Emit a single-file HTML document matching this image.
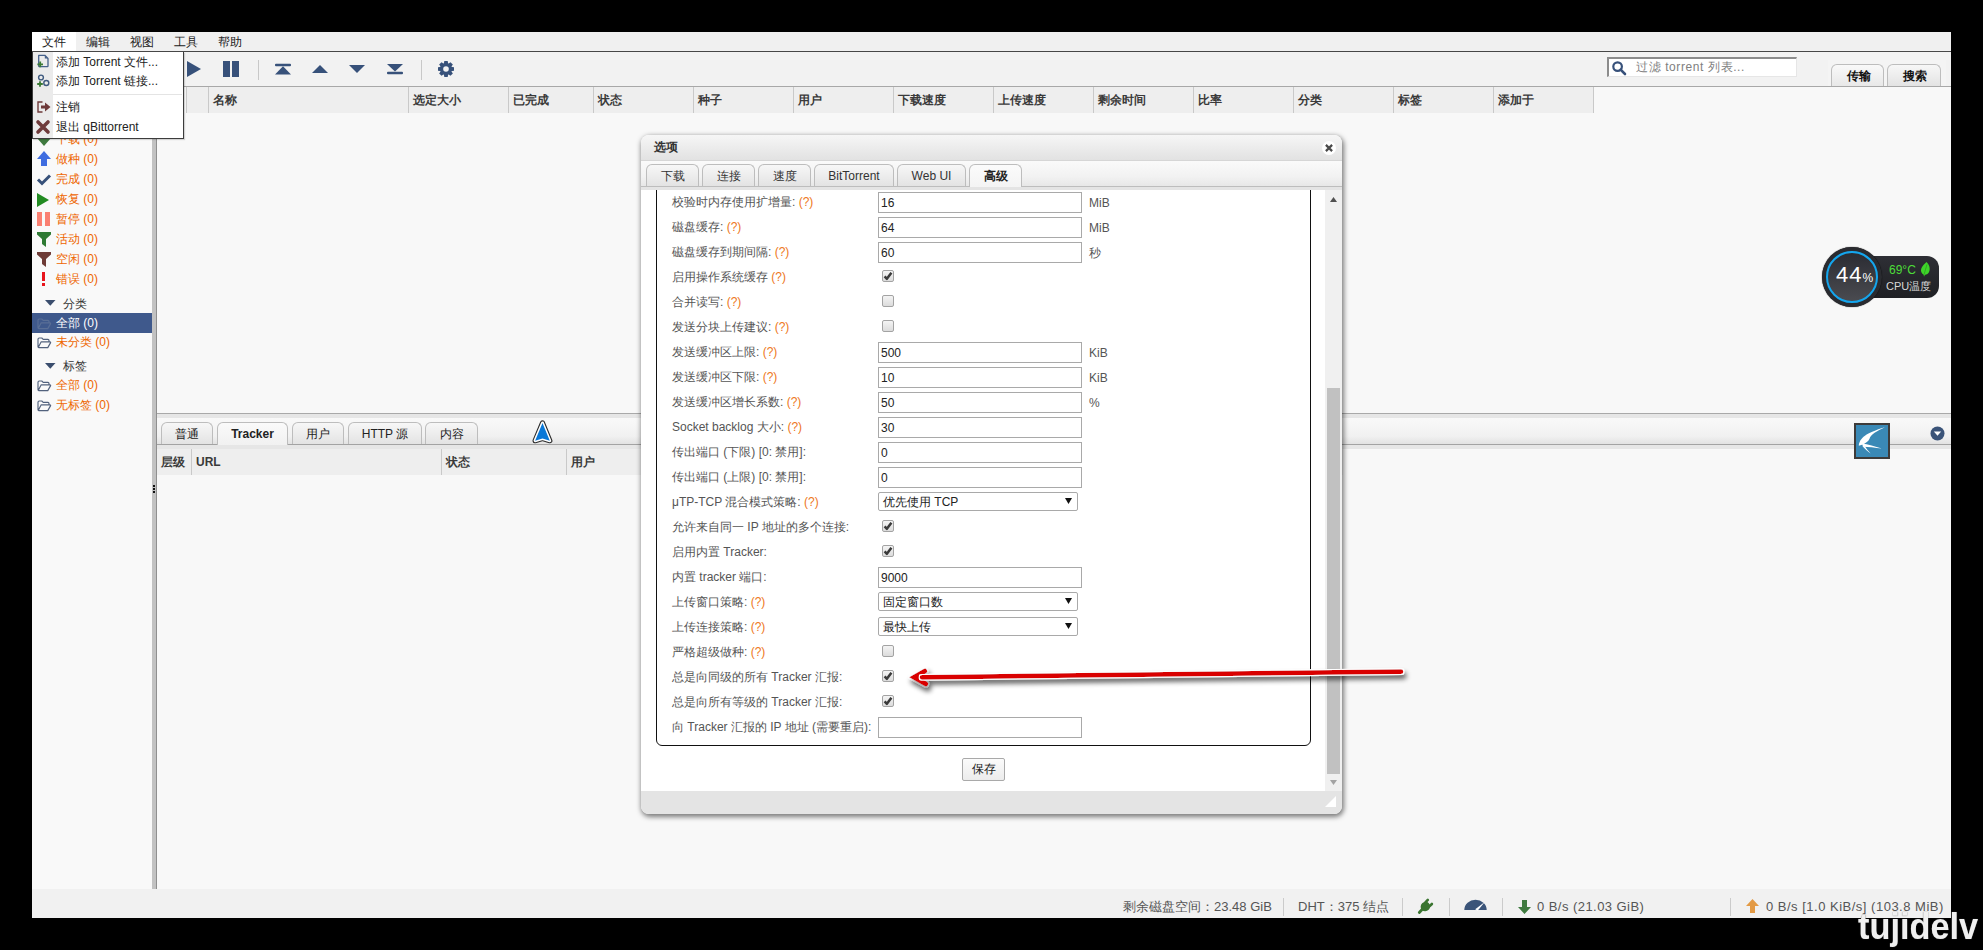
<!DOCTYPE html><html><head><meta charset="utf-8"><style>
*{box-sizing:border-box}
html,body{margin:0;padding:0}
body{width:1983px;height:950px;background:#000;position:relative;overflow:hidden;font-family:"Liberation Sans",sans-serif;font-size:12px;color:#333}
.a{position:absolute}
.t{position:absolute;white-space:nowrap;line-height:14px}
svg{position:absolute;overflow:visible}
#win{left:32px;top:32px;width:1919px;height:886px;background:#f8f8f8}
.hc{position:absolute;top:0;height:26px;border-left:1px solid #cacaca;line-height:26px;padding-left:4px;font-weight:bold;color:#3a3a3a;white-space:nowrap}
.st{position:absolute;color:#555;white-space:nowrap;line-height:14px;font-size:13px}
.sbs{position:absolute;top:898px;width:1px;height:18px;background:#cbcbcb}
.sl{position:absolute;left:56px;color:#ee6600;white-space:nowrap;line-height:14px}
.tab{position:absolute;border:1px solid #bdbdbd;border-bottom:none;border-radius:6px 6px 0 0;background:linear-gradient(#f7f7f7,#e3e3e3);text-align:center;white-space:nowrap;color:#333;line-height:20px}
.lbl{position:absolute;left:672px;color:#555;white-space:nowrap;line-height:14px}
.q{color:#ee7722}
.inp{position:absolute;left:878px;width:204px;height:21px;border:1px solid #a9a9a9;background:#fff;color:#222;padding-left:2px;padding-top:1px;line-height:18px;white-space:nowrap}
.sel{position:absolute;left:878px;width:200px;height:19px;border:1px solid #a9a9a9;border-radius:2px;background:#fff;color:#222;padding-left:4px;padding-top:1px;line-height:17px;white-space:nowrap}
.cb{position:absolute;left:882px;width:12px;height:12px;border:1px solid #a3a3a3;border-radius:2px;background:linear-gradient(#f4f4f4,#dcdcdc)}
.unit{position:absolute;left:1089px;color:#555;white-space:nowrap;line-height:14px}
</style></head><body>
<div id="win" class="a"></div>
<div class="a" style="left:32px;top:32px;width:1919px;height:19px;background:#f0f0f0"></div>
<div class="a" style="left:32px;top:51px;width:1919px;height:1px;background:#474747"></div>
<div class="a" style="left:32px;top:32px;width:44px;height:19px;background:#fff"></div>
<span class="t" style="left:42px;top:35px;color:#222">文件</span>
<span class="t" style="left:86px;top:35px;color:#222">编辑</span>
<span class="t" style="left:130px;top:35px;color:#222">视图</span>
<span class="t" style="left:174px;top:35px;color:#222">工具</span>
<span class="t" style="left:218px;top:35px;color:#222">帮助</span>
<div class="a" style="left:32px;top:52px;width:1919px;height:34px;background:#f2f2f2"></div>
<div class="a" style="left:157px;top:86px;width:1794px;height:1px;background:#a8a8a8"></div>
<svg style="left:187px;top:61px" width="15" height="16"><path d="M0 0L14 8L0 16Z" fill="#37517a"/></svg>
<div class="a" style="left:223px;top:61px;width:7px;height:16px;background:#37517a"></div>
<div class="a" style="left:232px;top:61px;width:7px;height:16px;background:#37517a"></div>
<div class="a" style="left:258px;top:60px;width:1px;height:20px;background:#c8c8c8"></div>
<svg style="left:275px;top:63px" width="16" height="12"><rect x="0" y="0.8" width="16" height="2.5" rx="1" fill="#37517a"/><path d="M8 3.3L16 11.6L0 11.6Z" fill="#37517a"/></svg>
<svg style="left:312px;top:65px" width="16" height="8"><path d="M8 0L16 8L0 8Z" fill="#37517a"/></svg>
<svg style="left:349px;top:65px" width="16" height="9"><path d="M0 0L16 0L8 8Z" fill="#37517a"/></svg>
<svg style="left:387px;top:64px" width="16" height="12"><path d="M0 0L16 0L8 7.4Z" fill="#37517a"/><rect x="0" y="7.8" width="16" height="2.4" rx="1" fill="#37517a"/></svg>
<div class="a" style="left:421px;top:60px;width:1px;height:20px;background:#c8c8c8"></div>
<svg style="left:438px;top:61px" width="16" height="16"><path d="M6.3 0H9.7L10.3 3.5H5.7Z" transform="rotate(0 8 8)" fill="#37517a"/><path d="M6.3 0H9.7L10.3 3.5H5.7Z" transform="rotate(45 8 8)" fill="#37517a"/><path d="M6.3 0H9.7L10.3 3.5H5.7Z" transform="rotate(90 8 8)" fill="#37517a"/><path d="M6.3 0H9.7L10.3 3.5H5.7Z" transform="rotate(135 8 8)" fill="#37517a"/><path d="M6.3 0H9.7L10.3 3.5H5.7Z" transform="rotate(180 8 8)" fill="#37517a"/><path d="M6.3 0H9.7L10.3 3.5H5.7Z" transform="rotate(225 8 8)" fill="#37517a"/><path d="M6.3 0H9.7L10.3 3.5H5.7Z" transform="rotate(270 8 8)" fill="#37517a"/><path d="M6.3 0H9.7L10.3 3.5H5.7Z" transform="rotate(315 8 8)" fill="#37517a"/><circle cx="8" cy="8" r="5.9" fill="#37517a"/><circle cx="8" cy="8" r="2.8" fill="#f2f2f2"/></svg>
<div class="a" style="left:1607px;top:57px;width:190px;height:20px;background:#fff;border-top:2px solid #8c8c8c;border-left:2px solid #8c8c8c;border-right:1px solid #e6e6e6;border-bottom:1px solid #e6e6e6"></div>
<svg style="left:1612px;top:61px" width="15" height="14"><circle cx="5.6" cy="5.6" r="4.3" fill="none" stroke="#37517a" stroke-width="2.2"/><path d="M8.6 8.6L13 13" stroke="#37517a" stroke-width="2.6" stroke-linecap="round"/></svg>
<span class="t" style="left:1636px;top:60px;color:#808080;letter-spacing:0.6px">过滤 torrent 列表...</span>
<div class="a" style="left:1828px;top:60px;width:118px;height:26px;background:#f4f4f4"></div>
<div class="tab" style="left:1831px;top:64px;width:53px;height:22px;background:linear-gradient(#f9f9f9,#e8e8e8);font-weight:bold;color:#111;line-height:22px;padding-left:2px">传输</div>
<div class="tab" style="left:1887px;top:64px;width:54px;height:22px;color:#111;line-height:22px;font-weight:bold;padding-left:2px">搜索</div>
<div class="a" style="left:32px;top:87px;width:120px;height:802px;background:#f9f9f9"></div>
<div class="a" style="left:152px;top:52px;width:4px;height:837px;background:#c2c2c2"></div>
<div class="a" style="left:156px;top:87px;width:1px;height:802px;background:#8f8f8f"></div>
<div class="a" style="left:153px;top:485px;width:2px;height:2px;background:#111"></div>
<div class="a" style="left:153px;top:488px;width:2px;height:2px;background:#111"></div>
<div class="a" style="left:153px;top:491px;width:2px;height:2px;background:#111"></div>
<span class="sl" style="top:132px;color:#ee6600">下载 (0)</span>
<span class="sl" style="top:152px;color:#ee6600">做种 (0)</span>
<span class="sl" style="top:172px;color:#ee6600">完成 (0)</span>
<span class="sl" style="top:192px;color:#ee6600">恢复 (0)</span>
<span class="sl" style="top:212px;color:#ee6600">暂停 (0)</span>
<span class="sl" style="top:232px;color:#ee6600">活动 (0)</span>
<span class="sl" style="top:252px;color:#ee6600">空闲 (0)</span>
<span class="sl" style="top:272px;color:#ee6600">错误 (0)</span>
<svg style="left:37px;top:131px" width="14" height="16"><path d="M4 0H10V7H14L7 15L0 7H4Z" fill="#3f7a3f"/></svg>
<svg style="left:37px;top:151px" width="14" height="16"><path d="M7 0L14 8H10V15H4V8H0Z" fill="#3f6de0"/></svg>
<svg style="left:37px;top:174px" width="14" height="11"><path d="M1 5.5L5 9.5L13 1.5" fill="none" stroke="#37517a" stroke-width="3"/></svg>
<svg style="left:37px;top:193px" width="13" height="14"><path d="M0 0L12 7L0 14Z" fill="#228b22"/></svg>
<div class="a" style="left:37px;top:212px;width:5px;height:14px;background:#fa8072"></div><div class="a" style="left:45px;top:212px;width:5px;height:14px;background:#fa8072"></div>
<svg style="left:37px;top:232px" width="14" height="15"><path d="M0 0H14V2.5L9 7V15L5 12V7L0 2.5Z" fill="#2f7a34"/></svg>
<svg style="left:37px;top:252px" width="14" height="15"><path d="M0 0H14V2.5L9 7V15L5 12V7L0 2.5Z" fill="#6e3b36"/></svg>
<div class="a" style="left:42px;top:272px;width:3px;height:9px;background:#e8141b"></div><div class="a" style="left:42px;top:283px;width:3px;height:3px;background:#e8141b"></div>
<svg style="left:45px;top:300px" width="11" height="7"><path d="M0 0H10.5L5.25 5.8Z" fill="#3b4e6e"/></svg>
<span class="t" style="left:63px;top:297px;color:#333">分类</span>
<div class="a" style="left:32px;top:313px;width:120px;height:20px;background:#3f598c"></div>
<svg style="left:37px;top:318px" width="15" height="12"><path d="M1 2.2Q1 1 2.2 1H4.8L6.2 2.4H11Q12 2.4 12 3.4V4.8M1 2.2V9.8Q1 10.6 1.8 10.6H10.8L13.6 5.6Q13.8 4.8 13 4.8H4.2L1.2 10.4" fill="none" stroke="#5a6f96" stroke-width="1.15" stroke-linejoin="round"/></svg>
<span class="sl" style="top:316px;color:#fff">全部 (0)</span>
<svg style="left:37px;top:337px" width="15" height="12"><path d="M1 2.2Q1 1 2.2 1H4.8L6.2 2.4H11Q12 2.4 12 3.4V4.8M1 2.2V9.8Q1 10.6 1.8 10.6H10.8L13.6 5.6Q13.8 4.8 13 4.8H4.2L1.2 10.4" fill="none" stroke="#52627d" stroke-width="1.15" stroke-linejoin="round"/></svg>
<span class="sl" style="top:335px;color:#ee6600">未分类 (0)</span>
<svg style="left:45px;top:363px" width="11" height="7"><path d="M0 0H10.5L5.25 5.8Z" fill="#3b4e6e"/></svg>
<span class="t" style="left:63px;top:359px;color:#333">标签</span>
<svg style="left:37px;top:380px" width="15" height="12"><path d="M1 2.2Q1 1 2.2 1H4.8L6.2 2.4H11Q12 2.4 12 3.4V4.8M1 2.2V9.8Q1 10.6 1.8 10.6H10.8L13.6 5.6Q13.8 4.8 13 4.8H4.2L1.2 10.4" fill="none" stroke="#52627d" stroke-width="1.15" stroke-linejoin="round"/></svg>
<span class="sl" style="top:378px;color:#ee6600">全部 (0)</span>
<svg style="left:37px;top:400px" width="15" height="12"><path d="M1 2.2Q1 1 2.2 1H4.8L6.2 2.4H11Q12 2.4 12 3.4V4.8M1 2.2V9.8Q1 10.6 1.8 10.6H10.8L13.6 5.6Q13.8 4.8 13 4.8H4.2L1.2 10.4" fill="none" stroke="#52627d" stroke-width="1.15" stroke-linejoin="round"/></svg>
<span class="sl" style="top:398px;color:#ee6600">无标签 (0)</span>
<div class="a" style="left:186px;top:87px;width:1407px;height:26px;background:#eeeeee"></div>
<div class="hc" style="left:186px;top:87px;width:1px;padding:0;border-left:1px solid #c9c9c9"></div>
<div class="hc" style="left:208px;top:87px;width:1px;padding:0;border-left:1px solid #c9c9c9"></div>
<span class="t" style="left:213px;top:93px;font-weight:bold;color:#3a3a3a">名称</span>
<div class="hc" style="left:408px;top:87px;width:1px;padding:0;border-left:1px solid #c9c9c9"></div>
<span class="t" style="left:413px;top:93px;font-weight:bold;color:#3a3a3a">选定大小</span>
<div class="hc" style="left:508px;top:87px;width:1px;padding:0;border-left:1px solid #c9c9c9"></div>
<span class="t" style="left:513px;top:93px;font-weight:bold;color:#3a3a3a">已完成</span>
<div class="hc" style="left:593px;top:87px;width:1px;padding:0;border-left:1px solid #c9c9c9"></div>
<span class="t" style="left:598px;top:93px;font-weight:bold;color:#3a3a3a">状态</span>
<div class="hc" style="left:693px;top:87px;width:1px;padding:0;border-left:1px solid #c9c9c9"></div>
<span class="t" style="left:698px;top:93px;font-weight:bold;color:#3a3a3a">种子</span>
<div class="hc" style="left:793px;top:87px;width:1px;padding:0;border-left:1px solid #c9c9c9"></div>
<span class="t" style="left:798px;top:93px;font-weight:bold;color:#3a3a3a">用户</span>
<div class="hc" style="left:893px;top:87px;width:1px;padding:0;border-left:1px solid #c9c9c9"></div>
<span class="t" style="left:898px;top:93px;font-weight:bold;color:#3a3a3a">下载速度</span>
<div class="hc" style="left:993px;top:87px;width:1px;padding:0;border-left:1px solid #c9c9c9"></div>
<span class="t" style="left:998px;top:93px;font-weight:bold;color:#3a3a3a">上传速度</span>
<div class="hc" style="left:1093px;top:87px;width:1px;padding:0;border-left:1px solid #c9c9c9"></div>
<span class="t" style="left:1098px;top:93px;font-weight:bold;color:#3a3a3a">剩余时间</span>
<div class="hc" style="left:1193px;top:87px;width:1px;padding:0;border-left:1px solid #c9c9c9"></div>
<span class="t" style="left:1198px;top:93px;font-weight:bold;color:#3a3a3a">比率</span>
<div class="hc" style="left:1293px;top:87px;width:1px;padding:0;border-left:1px solid #c9c9c9"></div>
<span class="t" style="left:1298px;top:93px;font-weight:bold;color:#3a3a3a">分类</span>
<div class="hc" style="left:1393px;top:87px;width:1px;padding:0;border-left:1px solid #c9c9c9"></div>
<span class="t" style="left:1398px;top:93px;font-weight:bold;color:#3a3a3a">标签</span>
<div class="hc" style="left:1493px;top:87px;width:1px;padding:0;border-left:1px solid #c9c9c9"></div>
<span class="t" style="left:1498px;top:93px;font-weight:bold;color:#3a3a3a">添加于</span>
<div class="hc" style="left:1593px;top:87px;width:1px;padding:0;border-left:1px solid #c9c9c9"></div>
<div class="a" style="left:157px;top:413px;width:1794px;height:1px;background:#a9a9a9"></div>
<div class="a" style="left:157px;top:414px;width:1794px;height:4px;background:#e6e6e6"></div>
<div class="a" style="left:157px;top:418px;width:1794px;height:26px;background:linear-gradient(#f9f9f9,#f1f1f1 70%,#e2e2e2)"></div>
<div class="a" style="left:157px;top:444px;width:1794px;height:1px;background:#a3a3a3"></div>
<div class="a" style="left:157px;top:445px;width:1794px;height:4px;background:#e6e6e6"></div>
<div class="tab" style="left:161px;top:422px;width:52px;height:22px;;color:#222;line-height:22px;">普通</div>
<div class="tab" style="left:217px;top:422px;width:71px;height:23px;background:linear-gradient(#fafafa,#f1f1f1);color:#222;line-height:22px;font-weight:bold">Tracker</div>
<div class="tab" style="left:292px;top:422px;width:52px;height:22px;;color:#222;line-height:22px;">用户</div>
<div class="tab" style="left:348px;top:422px;width:74px;height:22px;;color:#222;line-height:22px;">HTTP 源</div>
<div class="tab" style="left:425px;top:422px;width:53px;height:22px;;color:#222;line-height:22px;">内容</div>
<svg style="left:530px;top:419px" width="25" height="26"><path d="M12.5 4L19.8 21.7L12.5 19.6L5.1 21.7Z" fill="#333" stroke="#2a2a2a" stroke-width="5.2" stroke-linejoin="round"/><path d="M12.5 4L19.8 21.7L12.5 19.6L5.1 21.7Z" fill="#fff" stroke="#fff" stroke-width="3" stroke-linejoin="round"/><path d="M12.5 4L19.8 21.7L12.5 19.6L5.1 21.7Z" fill="#0a78d7"/></svg>
<div class="a" style="left:157px;top:449px;width:1186px;height:26px;background:#eeeeee"></div>
<div class="a" style="left:191px;top:449px;width:1px;height:26px;background:#c9c9c9"></div>
<div class="a" style="left:441px;top:449px;width:1px;height:26px;background:#c9c9c9"></div>
<div class="a" style="left:566px;top:449px;width:1px;height:26px;background:#c9c9c9"></div>
<span class="t" style="left:161px;top:455px;font-weight:bold;color:#3a3a3a">层级</span>
<span class="t" style="left:196px;top:455px;font-weight:bold;color:#3a3a3a">URL</span>
<span class="t" style="left:446px;top:455px;font-weight:bold;color:#3a3a3a">状态</span>
<span class="t" style="left:571px;top:455px;font-weight:bold;color:#3a3a3a">用户</span>
<div class="a" style="left:1854px;top:423px;width:36px;height:36px;background:#3a89b6;border:2px solid #3d3b3a"></div>
<svg style="left:1856px;top:425px" width="32" height="32"><path d="M2.8 20.8C3.5 13 10 8 28.8 2.3C21 6 14.5 9.5 13.5 13.8C12.5 16.5 9 18.5 6 19.8Z" fill="#fff"/><path d="M6 18.6C12 19.5 19 21.5 25.8 23.6C19 22.8 12 21.8 7 21.8Z" fill="#fff"/><path d="M6.5 21.2C9 24 12 26.5 14.7 28.6C12.5 26 10.5 23.8 8.8 21.2Z" fill="#fff"/></svg>
<svg style="left:1930px;top:426px" width="15" height="15"><circle cx="7.5" cy="7.5" r="7" fill="#3b5479"/><path d="M3.8 5.5H11.2L7.5 9.8Z" fill="#fff"/></svg>
<div class="a" style="left:32px;top:889px;width:1919px;height:29px;background:#f1f1f1"></div>
<span class="st" style="left:1123px;top:900px">剩余磁盘空间：23.48 GiB</span>
<div class="sbs" style="left:1283px"></div>
<span class="st" style="left:1298px;top:900px">DHT：375 结点</span>
<div class="sbs" style="left:1402px"></div>
<svg style="left:1417px;top:898px" width="17" height="16"><path d="M2.3 14.4L6 10.6" stroke="#3a7530" stroke-width="2.8" stroke-linecap="round"/><path d="M8.4 4.4L10.8 1.9M12.4 8.4L14.9 6" stroke="#3a7530" stroke-width="2.6" stroke-linecap="round"/><ellipse cx="8.4" cy="8.6" rx="4.6" ry="4.9" transform="rotate(45 8.4 8.6)" fill="#3a7530"/></svg>
<div class="sbs" style="left:1449px"></div>
<svg style="left:1464px;top:899px" width="23" height="12"><path d="M0.3 11A11.2 10.2 0 0 1 22.7 11Z" fill="#3b5479"/><path d="M11.2 10.2L20.8 3L13.6 11.8Z" fill="#fff"/></svg>
<div class="sbs" style="left:1502px"></div>
<svg style="left:1518px;top:900px" width="13" height="14"><path d="M4 0H9V7H13L6.5 14L0 7H4Z" fill="#3f7a3f"/></svg>
<span class="st" style="left:1537px;top:900px;letter-spacing:0.45px">0 B/s (21.03 GiB)</span>
<div class="sbs" style="left:1730px"></div>
<svg style="left:1746px;top:899px" width="13" height="14"><path d="M6.5 0L13 7H9V14H4V7H0Z" fill="#e39a45"/></svg>
<span class="st" style="left:1766px;top:900px;letter-spacing:0.5px">0 B/s [1.0 KiB/s] (103.8 MiB)</span>
<div class="a" style="left:32px;top:52px;width:152px;height:87px;background:#fff;border:1px solid #3c3c3c;border-top:none;box-shadow:1px 1px 1px rgba(0,0,0,.15)"></div>
<div class="a" style="left:33px;top:52px;width:20px;height:86px;background:#ebebeb"></div>
<div class="a" style="left:53px;top:94px;width:129px;height:1px;background:#e4e4e4"></div>
<span class="t" style="left:56px;top:55px;color:#222">添加 Torrent 文件...</span>
<span class="t" style="left:56px;top:74px;color:#222">添加 Torrent 链接...</span>
<span class="t" style="left:56px;top:100px;color:#222">注销</span>
<span class="t" style="left:56px;top:120px;color:#222">退出 qBittorrent</span>
<svg style="left:35px;top:54px" width="15" height="15"><path d="M3.7 1.3H9.8L13 4.5V12Q13 12.6 12.4 12.6H4.3Q3.7 12.6 3.7 12Z" fill="none" stroke="#46618a" stroke-width="1.3" stroke-linejoin="round"/><path d="M9.8 1.3V4.5H13Z" fill="#46618a"/><path d="M5.2 7.6V13.2M2.4 10.4H8" stroke="#3a7a34" stroke-width="1.8"/></svg>
<svg style="left:35px;top:73px" width="16" height="15"><circle cx="6" cy="4.5" r="2.4" fill="none" stroke="#3f5a7f" stroke-width="1.4"/><circle cx="11.3" cy="10" r="2.5" fill="none" stroke="#3f5a7f" stroke-width="1.4"/><path d="M5 8.2V13.8M2.2 11H7.8" stroke="#3a7a34" stroke-width="1.8"/></svg>
<svg style="left:37px;top:101px" width="14" height="12"><path d="M5.5 1H1V11H5.5" fill="none" stroke="#6e3a3a" stroke-width="1.4"/><path d="M4 4.5H8V1.5L13.5 6L8 10.5V7.5H4Z" fill="#6e3a3a"/></svg>
<svg style="left:36px;top:120px" width="14" height="14"><path d="M2 2L12 12M12 2L2 12" stroke="#6e3a3a" stroke-width="3.6" stroke-linecap="round"/></svg>
<div class="a" style="left:641px;top:135px;width:701px;height:679px;border-radius:8px;background:#fff;box-shadow:1px 2px 5px 1px rgba(0,0,0,.5);overflow:hidden">
<div class="a" style="left:0;top:0;width:701px;height:26px;background:linear-gradient(#f6f6f6,#e2e2e2);border-bottom:1px solid #d6d6d6"></div>
<span class="t" style="left:13px;top:5px;font-weight:bold;color:#333">选项</span>
<svg style="left:681px;top:6px" width="14" height="14"><circle cx="7" cy="7" r="7" fill="#fff"/><path d="M3.9 3.9L10.1 10.1M10.1 3.9L3.9 10.1" stroke="#4a4a4a" stroke-width="2.2"/></svg>
<div class="a" style="left:0;top:26px;width:701px;height:26px;background:linear-gradient(#fafafa,#f2f2f2 60%,#e6e6e6)"></div>
<div class="a" style="left:0;top:51px;width:701px;height:1px;background:#bdbdbd"></div>
<div class="a" style="left:0;top:52px;width:701px;height:3px;background:#e4e4e4"></div>
<div class="tab" style="left:5px;top:29px;width:53px;height:22px;color:#333;line-height:22px;">下载</div>
<div class="tab" style="left:61px;top:29px;width:53px;height:22px;color:#333;line-height:22px;">连接</div>
<div class="tab" style="left:117px;top:29px;width:53px;height:22px;color:#333;line-height:22px;">速度</div>
<div class="tab" style="left:173px;top:29px;width:80px;height:22px;color:#333;line-height:22px;">BitTorrent</div>
<div class="tab" style="left:256px;top:29px;width:69px;height:22px;color:#333;line-height:22px;">Web UI</div>
<div class="tab" style="left:328px;top:29px;width:53px;height:23px;background:linear-gradient(#fbfbfb,#f4f4f4);color:#222;line-height:22px;font-weight:bold">高级</div>
<div class="a" style="left:684px;top:55px;width:17px;height:601px;background:#f0f0f0"></div>
<div class="a" style="left:686px;top:253px;width:13px;height:386px;background:#c1c1c1"></div>
<svg style="left:689px;top:62px" width="8" height="5"><path d="M0 5H7L3.5 0Z" fill="#505050"/></svg>
<svg style="left:689px;top:645px" width="8" height="5"><path d="M0 0H7L3.5 5Z" fill="#a3a3a3"/></svg>
<div class="a" style="left:0;top:656px;width:701px;height:23px;background:#e4e4e4"></div>
<svg style="left:684px;top:661px" width="11" height="11"><path d="M11 0V11H0Z" fill="#fff"/></svg>
<div class="a" style="left:0;top:55px;width:684px;height:601px;overflow:hidden"><div class="a" style="left:15px;top:-20px;width:655px;height:576px;border:1.5px solid #111;border-radius:6px"></div></div>
</div>
<span class="lbl" style="top:195px">校验时内存使用扩增量: <span class="q">(?)</span></span>
<div class="inp" style="top:192px">16</div>
<span class="unit" style="top:196px">MiB</span>
<span class="lbl" style="top:220px">磁盘缓存: <span class="q">(?)</span></span>
<div class="inp" style="top:217px">64</div>
<span class="unit" style="top:221px">MiB</span>
<span class="lbl" style="top:245px">磁盘缓存到期间隔: <span class="q">(?)</span></span>
<div class="inp" style="top:242px">60</div>
<span class="unit" style="top:246px">秒</span>
<span class="lbl" style="top:270px">启用操作系统缓存 <span class="q">(?)</span></span>
<div class="cb" style="top:270px"><svg style="left:-1px;top:-1px" width="12" height="12"><path d="M2.6 6.4L4.9 8.8L9.4 2.8" fill="none" stroke="#3a3a3a" stroke-width="2.5" stroke-linejoin="round"/></svg></div>
<span class="lbl" style="top:295px">合并读写: <span class="q">(?)</span></span>
<div class="cb" style="top:295px"></div>
<span class="lbl" style="top:320px">发送分块上传建议: <span class="q">(?)</span></span>
<div class="cb" style="top:320px"></div>
<span class="lbl" style="top:345px">发送缓冲区上限: <span class="q">(?)</span></span>
<div class="inp" style="top:342px">500</div>
<span class="unit" style="top:346px">KiB</span>
<span class="lbl" style="top:370px">发送缓冲区下限: <span class="q">(?)</span></span>
<div class="inp" style="top:367px">10</div>
<span class="unit" style="top:371px">KiB</span>
<span class="lbl" style="top:395px">发送缓冲区增长系数: <span class="q">(?)</span></span>
<div class="inp" style="top:392px">50</div>
<span class="unit" style="top:396px">%</span>
<span class="lbl" style="top:420px">Socket backlog 大小: <span class="q">(?)</span></span>
<div class="inp" style="top:417px">30</div>
<span class="lbl" style="top:445px">传出端口 (下限) [0: 禁用]:</span>
<div class="inp" style="top:442px">0</div>
<span class="lbl" style="top:470px">传出端口 (上限) [0: 禁用]:</span>
<div class="inp" style="top:467px">0</div>
<span class="lbl" style="top:495px">μTP-TCP 混合模式策略: <span class="q">(?)</span></span>
<div class="sel" style="top:492px">优先使用 TCP<svg style="left:186px;top:5px" width="7" height="6"><path d="M0 0H7L3.5 6Z" fill="#111"/></svg></div>
<span class="lbl" style="top:520px">允许来自同一 IP 地址的多个连接:</span>
<div class="cb" style="top:520px"><svg style="left:-1px;top:-1px" width="12" height="12"><path d="M2.6 6.4L4.9 8.8L9.4 2.8" fill="none" stroke="#3a3a3a" stroke-width="2.5" stroke-linejoin="round"/></svg></div>
<span class="lbl" style="top:545px">启用内置 Tracker:</span>
<div class="cb" style="top:545px"><svg style="left:-1px;top:-1px" width="12" height="12"><path d="M2.6 6.4L4.9 8.8L9.4 2.8" fill="none" stroke="#3a3a3a" stroke-width="2.5" stroke-linejoin="round"/></svg></div>
<span class="lbl" style="top:570px">内置 tracker 端口:</span>
<div class="inp" style="top:567px">9000</div>
<span class="lbl" style="top:595px">上传窗口策略: <span class="q">(?)</span></span>
<div class="sel" style="top:592px">固定窗口数<svg style="left:186px;top:5px" width="7" height="6"><path d="M0 0H7L3.5 6Z" fill="#111"/></svg></div>
<span class="lbl" style="top:620px">上传连接策略: <span class="q">(?)</span></span>
<div class="sel" style="top:617px">最快上传<svg style="left:186px;top:5px" width="7" height="6"><path d="M0 0H7L3.5 6Z" fill="#111"/></svg></div>
<span class="lbl" style="top:645px">严格超级做种: <span class="q">(?)</span></span>
<div class="cb" style="top:645px"></div>
<span class="lbl" style="top:670px">总是向同级的所有 Tracker 汇报:</span>
<div class="cb" style="top:670px"><svg style="left:-1px;top:-1px" width="12" height="12"><path d="M2.6 6.4L4.9 8.8L9.4 2.8" fill="none" stroke="#3a3a3a" stroke-width="2.5" stroke-linejoin="round"/></svg></div>
<span class="lbl" style="top:695px">总是向所有等级的 Tracker 汇报:</span>
<div class="cb" style="top:695px"><svg style="left:-1px;top:-1px" width="12" height="12"><path d="M2.6 6.4L4.9 8.8L9.4 2.8" fill="none" stroke="#3a3a3a" stroke-width="2.5" stroke-linejoin="round"/></svg></div>
<span class="lbl" style="top:720px">向 Tracker 汇报的 IP 地址 (需要重启):</span>
<div class="inp" style="top:717px"></div>
<div class="a" style="left:962px;top:758px;width:43px;height:23px;border:1px solid #a9a9a9;border-radius:2px;background:linear-gradient(#fbfbfb,#ececec);text-align:center;line-height:21px;color:#222">保存</div>
<div class="a" style="left:1850px;top:256px;width:89px;height:42px;border-radius:0 12px 12px 0;background:linear-gradient(#2e2f35,#1f2024)"></div>
<div class="a" style="left:1822px;top:247px;width:60px;height:60px;border-radius:50%;background:#2a2b30;box-shadow:0 0 1px #000"></div>
<div class="a" style="left:1826px;top:251px;width:52px;height:52px;border-radius:50%;border:2px solid #14a6ee;background:linear-gradient(#2b2c33,#4a4b50)"></div>
<span class="t" style="left:1836px;top:265px;color:#fff;font-size:22px;line-height:20px;letter-spacing:1px">44<span style="font-size:12px;letter-spacing:0">%</span></span>
<span class="t" style="left:1889px;top:263px;color:#4ddd39;font-size:12px">69°C</span>
<svg style="left:1920px;top:262px" width="11" height="15"><path d="M6.5 0C9.8 3 10.6 7.5 8.8 10.5C7.8 12 6.4 12.6 4.8 12.9L4 14.8L3.7 12.7C1.3 11.6 0.4 9 1.3 6.5C2.2 4 4.4 2 6.5 0Z" fill="#3ed42a"/><path d="M4 12.8C5 9 6.3 5 7 2.5" stroke="#2a9a1c" stroke-width="0.7" fill="none"/></svg>
<span class="t" style="left:1886px;top:279px;color:#d8d8d8;font-size:11px">CPU温度</span>
<svg style="left:0;top:0" width="1983" height="950"><defs><filter id="sh" filterUnits="userSpaceOnUse" x="880" y="640" width="560" height="70"><feMorphology in="SourceAlpha" operator="dilate" radius="1.4" result="d"/><feFlood flood-color="#fff"/><feComposite in2="d" operator="in" result="w"/><feGaussianBlur in="d" stdDeviation="2.5"/><feOffset dx="2" dy="4"/><feComponentTransfer><feFuncA type="linear" slope="0.6"/></feComponentTransfer><feComposite operator="over" in2="w" result="sw"/><feMerge><feMergeNode in="sw"/><feMergeNode in="SourceGraphic"/></feMerge></filter><filter id="ol" filterUnits="userSpaceOnUse" x="880" y="640" width="560" height="70"><feMorphology in="SourceAlpha" operator="dilate" radius="1.4" result="d"/><feFlood flood-color="#fff"/><feComposite in2="d" operator="in" result="w"/><feMerge><feMergeNode in="w"/><feMergeNode in="SourceGraphic"/></feMerge></filter></defs><g filter="url(#sh)"><path d="M924.8 671.1L914 677.3L925.8 683.9" fill="none" stroke="#d90000" stroke-width="4.8" stroke-linecap="round" stroke-linejoin="miter" stroke-miterlimit="10"/><path d="M1401 671.6L922 677.3" fill="none" stroke="#d90000" stroke-width="4.7" stroke-linecap="round"/></g><g filter="url(#ol)"><path d="M1401 671.6L922 677.3" fill="none" stroke="#d90000" stroke-width="4.7" stroke-linecap="round"/></g></svg>
<span class="t" style="left:1858px;top:907px;font-size:34px;line-height:40px;font-weight:bold;color:#f0f0f0;transform:scale(1.01,1.07);transform-origin:0 31px;text-shadow:0 0 1px #555">tujidelv</span>
</body></html>
